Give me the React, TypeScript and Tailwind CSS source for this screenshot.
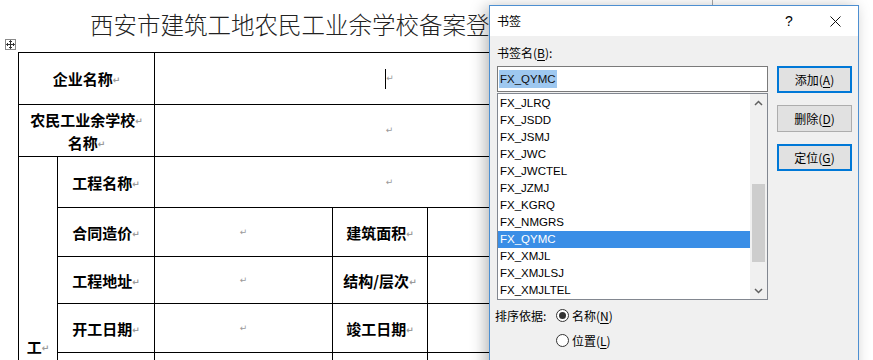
import React from "react";

const CJK = '"Noto Sans CJK SC", "Noto Sans", sans-serif';
const UI = '"Liberation Sans", "Noto Sans CJK SC", sans-serif';

function Mark() {
  return (
    <span
      className="text-[9px] text-[#9a9a9a] align-middle leading-none"
      style={{ fontFamily: '"DejaVu Sans", sans-serif' }}
    >
      ↵
    </span>
  );
}

function Label({ children }: { children: React.ReactNode }) {
  return (
    <span className="text-[15px] font-bold text-black leading-[23px]" style={{ fontFamily: CJK }}>
      {children}
      <Mark />
    </span>
  );
}

const cell = "border-r border-b border-black flex items-center justify-center";

function U({ c }: { c: string }) {
  return <span className="underline underline-offset-2">{c}</span>;
}

function Btn({ label, k, blue }: { label: string; k: string; blue?: boolean }) {
  return (
    <div
      className={
        "h-[27px] w-[75px] flex items-center justify-center bg-[#e1e1e1] text-[12px] text-black " +
        (blue ? "border-2 border-[#0078d7]" : "border border-[#adadad]")
      }
      style={{ fontFamily: CJK }}
    >
      {label}(<U c={k} />)
    </div>
  );
}

function Radio({ checked }: { checked?: boolean }) {
  return (
    <div className="w-[13px] h-[13px] rounded-full border border-[#333] bg-white flex items-center justify-center">
      {checked && <div className="w-[7px] h-[7px] rounded-full bg-[#333]" />}
    </div>
  );
}

const items = [
  "FX_JLRQ",
  "FX_JSDD",
  "FX_JSMJ",
  "FX_JWC",
  "FX_JWCTEL",
  "FX_JZMJ",
  "FX_KGRQ",
  "FX_NMGRS",
  "FX_QYMC",
  "FX_XMJL",
  "FX_XMJLSJ",
  "FX_XMJLTEL",
];

export default function App() {
  return (
    <div className="relative w-[873px] h-[360px] overflow-hidden bg-white">
      {/* document (visible part left of the dialog) */}
      <div className="pl-[18px] w-[489px] overflow-hidden">
        <div
          className="mt-[8px] pl-[72px] h-[32px] leading-[32px] text-[23.5px] font-light whitespace-nowrap text-[#222] overflow-hidden"
          style={{ fontFamily: '"Noto Sans CJK SC", serif' }}
        >
          西安市建筑工地农民工业余学校备案登
        </div>
        <div className="mt-[12px] w-[620px] border-l border-t border-black grid grid-cols-[39px_97px_178px_95px_211px] grid-rows-[52px_52px_51px_49px_47px_49px_60px]">
          <div className={cell + " col-span-2"}>
            <Label>企业名称</Label>
          </div>
          <div className={cell + " col-span-3 pr-[14px]"}>
            <span className="inline-block w-px h-[20px] bg-black" />
            <Mark />
          </div>
          <div className={cell + " col-span-2 flex-col"}>
            <Label>农民工业余学校</Label>
            <Label>名称</Label>
          </div>
          <div className={cell + " col-span-3 pr-[14px]"}>
            <Mark />
          </div>
          <div className={"border-r border-b border-black row-span-5 flex flex-col items-center pt-[182px]"}>
            <span className="text-[15px] font-bold leading-[16px]" style={{ fontFamily: CJK }}>
              工<Mark />
            </span>
          </div>
          <div className={cell}>
            <Label>工程名称</Label>
          </div>
          <div className={cell + " col-span-3 pr-[14px]"}>
            <Mark />
          </div>
          <div className={cell}>
            <Label>合同造价</Label>
          </div>
          <div className={cell}>
            <Mark />
          </div>
          <div className={cell}>
            <Label>建筑面积</Label>
          </div>
          <div className={cell} />
          <div className={cell}>
            <Label>工程地址</Label>
          </div>
          <div className={cell}>
            <Mark />
          </div>
          <div className={cell}>
            <Label>结构/层次</Label>
          </div>
          <div className={cell} />
          <div className={cell}>
            <Label>开工日期</Label>
          </div>
          <div className={cell}>
            <Mark />
          </div>
          <div className={cell}>
            <Label>竣工日期</Label>
          </div>
          <div className={cell} />
          <div className={cell} />
          <div className={cell} />
          <div className={cell} />
          <div className={cell} />
        </div>
      </div>

      {/* table move handle */}
      <div className="absolute left-[5px] top-[39px] w-[11px] h-[11px] border border-[#8a8a8a] bg-white flex items-center justify-center">
        <svg width="9" height="9" viewBox="0 0 9 9" fill="none" stroke="#333" strokeWidth="1">
          <path d="M4.5 0.5v8M0.5 4.5h8" />
          <path d="M3 2l1.5-1.5L6 2M3 7l1.5 1.5L6 7M2 3L0.5 4.5 2 6M7 3l1.5 1.5L7 6" />
        </svg>
      </div>

      {/* background window line */}
      <div className="absolute left-[712px] top-0 w-px h-[6px] bg-[#a8a8a8]" />

      {/* dialog */}
      <div className="absolute left-[489px] top-[5px] w-[370px] h-[380px] border border-[#4d8fd1] bg-[#f0f0f0] shadow-[-4px_2px_14px_rgba(0,0,0,0.28)] flex flex-col">
        <div className="h-[30px] bg-white flex items-center shrink-0">
          <div className="pl-[7px] flex-1 text-[12px] text-black" style={{ fontFamily: CJK }}>
            书签
          </div>
          <div className="w-[46px] h-full flex items-center justify-center text-[14px] text-black" style={{ fontFamily: '"Liberation Sans", sans-serif' }}>
            ?
          </div>
          <div className="w-[46px] h-full flex items-center justify-center">
            <svg width="11" height="11" viewBox="0 0 11 11" stroke="#111" strokeWidth="1">
              <path d="M0.5 0.5l10 10M10.5 0.5l-10 10" />
            </svg>
          </div>
        </div>
        <div className="flex pl-[7px] pt-[9px] gap-[9px]">
          <div className="w-[271px] flex flex-col">
            <div className="h-[16px] leading-[16px] text-[12px] text-black" style={{ fontFamily: CJK }}>
              书签名(<U c="B" />):
            </div>
            <div className="mt-[5px] h-[26px] border border-[#7a7a7a] bg-white flex items-center pl-[1px]">
              <span className="bg-[#9ec8f0] h-[18px] leading-[18px] text-[11.5px] text-[#111] px-px" style={{ fontFamily: UI }}>
                FX_QYMC
              </span>
            </div>
            <div className="mt-px h-[207px] border border-[#828790] bg-white flex">
              <div className="flex-1 pt-px">
                {items.map((it) => (
                  <div
                    key={it}
                    className={
                      "h-[17px] leading-[17px] pl-[2px] text-[11.5px] " +
                      (it === "FX_QYMC" ? "bg-[#3a8ee6] text-white" : "text-black")
                    }
                    style={{ fontFamily: UI }}
                  >
                    {it}
                  </div>
                ))}
              </div>
              <div className="w-[17px] bg-[#f0f0f0] flex flex-col items-center">
                <div className="h-[17px] w-full flex items-center justify-center">
                  <svg width="9" height="6" viewBox="0 0 9 6" fill="none" stroke="#606060" strokeWidth="1.5">
                    <path d="M1 5l3.5-3.5L8 5" />
                  </svg>
                </div>
                <div className="flex-1 w-full px-[2px] pt-[73px]">
                  <div className="h-[78px] w-full bg-[#cdcdcd]" />
                </div>
                <div className="h-[17px] w-full flex items-center justify-center">
                  <svg width="9" height="6" viewBox="0 0 9 6" fill="none" stroke="#606060" strokeWidth="1.5">
                    <path d="M1 1l3.5 3.5L8 1" />
                  </svg>
                </div>
              </div>
            </div>
            <div className="flex -ml-[2px] mt-[3px] text-[12px] text-black" style={{ fontFamily: CJK }}>
              <div className="w-[61px] h-[25px] flex items-center">排序依据:</div>
              <div className="flex flex-col">
                <div className="h-[25px] flex items-center gap-[3px]">
                  <Radio checked />
                  <span>
                    名称(<U c="N" />)
                  </span>
                </div>
                <div className="h-[25px] flex items-center gap-[3px]">
                  <Radio />
                  <span>
                    位置(<U c="L" />)
                  </span>
                </div>
              </div>
            </div>
          </div>
          <div className="pt-[21px] flex flex-col gap-[12px]">
            <Btn label="添加" k="A" blue />
            <Btn label="删除" k="D" />
            <Btn label="定位" k="G" blue />
          </div>
        </div>
      </div>
    </div>
  );
}
